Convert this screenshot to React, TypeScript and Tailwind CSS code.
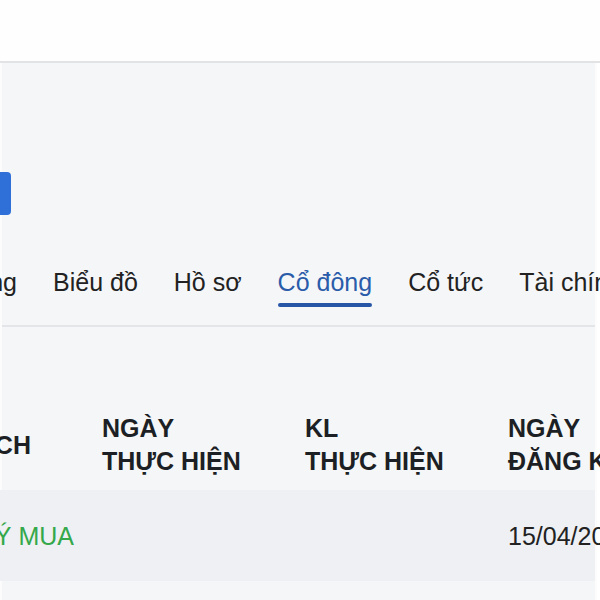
const TABS = ['Thị trường', 'Biểu đồ', 'Hồ sơ', 'Cổ đông', 'Cổ tức', 'Tài chính'];
const ACTIVE = 'Cổ đông';

const COLS = [
  { lines: ['GIAO DỊCH'] },
  { lines: ['NGÀY', 'THỰC HIỆN'] },
  { lines: ['KL', 'THỰC HIỆN'] },
  { lines: ['NGÀY', 'ĐĂNG KÝ'] },
];

export default function App() {
  return (
    <div className="h-[600px] w-[600px] overflow-hidden bg-white font-['Liberation_Sans',Arial,sans-serif] text-[#222]">
      {/* top white strip */}
      <div className="h-[61px] bg-[#fefefe]" />
      <div className="h-[2px] bg-[#e2e3e5]" />

      <div className="h-[537px] w-[597px] border-x-2 border-[#fcfcfd] bg-[#f5f6f8]">
        <div className="pt-[109px]">
          <button type="button" className="-ml-[2px] block h-[43px] w-[11px] rounded-r-[4px] bg-[#2f6fd8]" />
        </div>

        {/* tabs */}
        <div className="mt-[52px] border-b-2 border-[#e4e5e8]">
          <nav className="flex gap-[36px] whitespace-nowrap text-[25px] leading-[30px]">
            {TABS.map((t, i) => {
              const active = t === ACTIVE;
              return (
                <div
                  key={t}
                  className={`flex shrink-0 flex-col pb-[18px] ${i === 0 ? '-ml-[85px] w-[100px] items-end' : ''}`}
                >
                  <span className={active ? 'text-[#2a5caa]' : 'text-[#222]'}>{t}</span>
                  <span className={`mt-[6px] h-[4px] w-full rounded-sm ${active ? 'bg-[#2756a6]' : 'bg-transparent'}`} />
                </div>
              );
            })}
          </nav>
        </div>

        {/* table */}
        <div className="-ml-[103px] whitespace-nowrap">
          <div className="flex pt-[85px] pb-[12px] text-[25px] font-bold leading-[33px] text-[#1c1f24]">
            {COLS.map((c, i) => (
              <div key={i} className="flex w-[203px] shrink-0 flex-col justify-center">
                {c.lines.map((l) => (
                  <span key={l}>{l}</span>
                ))}
              </div>
            ))}
          </div>
          <div className="flex h-[91px] items-center bg-[#eef0f3] text-[25px] leading-[30px]">
            <div className="w-[203px] shrink-0 text-[#34a84a]">ĐĂNG KÝ MUA</div>
            <div className="w-[203px] shrink-0" />
            <div className="w-[203px] shrink-0" />
            <div className="w-[203px] shrink-0 text-[#222]">15/04/2024</div>
          </div>
        </div>
      </div>
    </div>
  );
}
